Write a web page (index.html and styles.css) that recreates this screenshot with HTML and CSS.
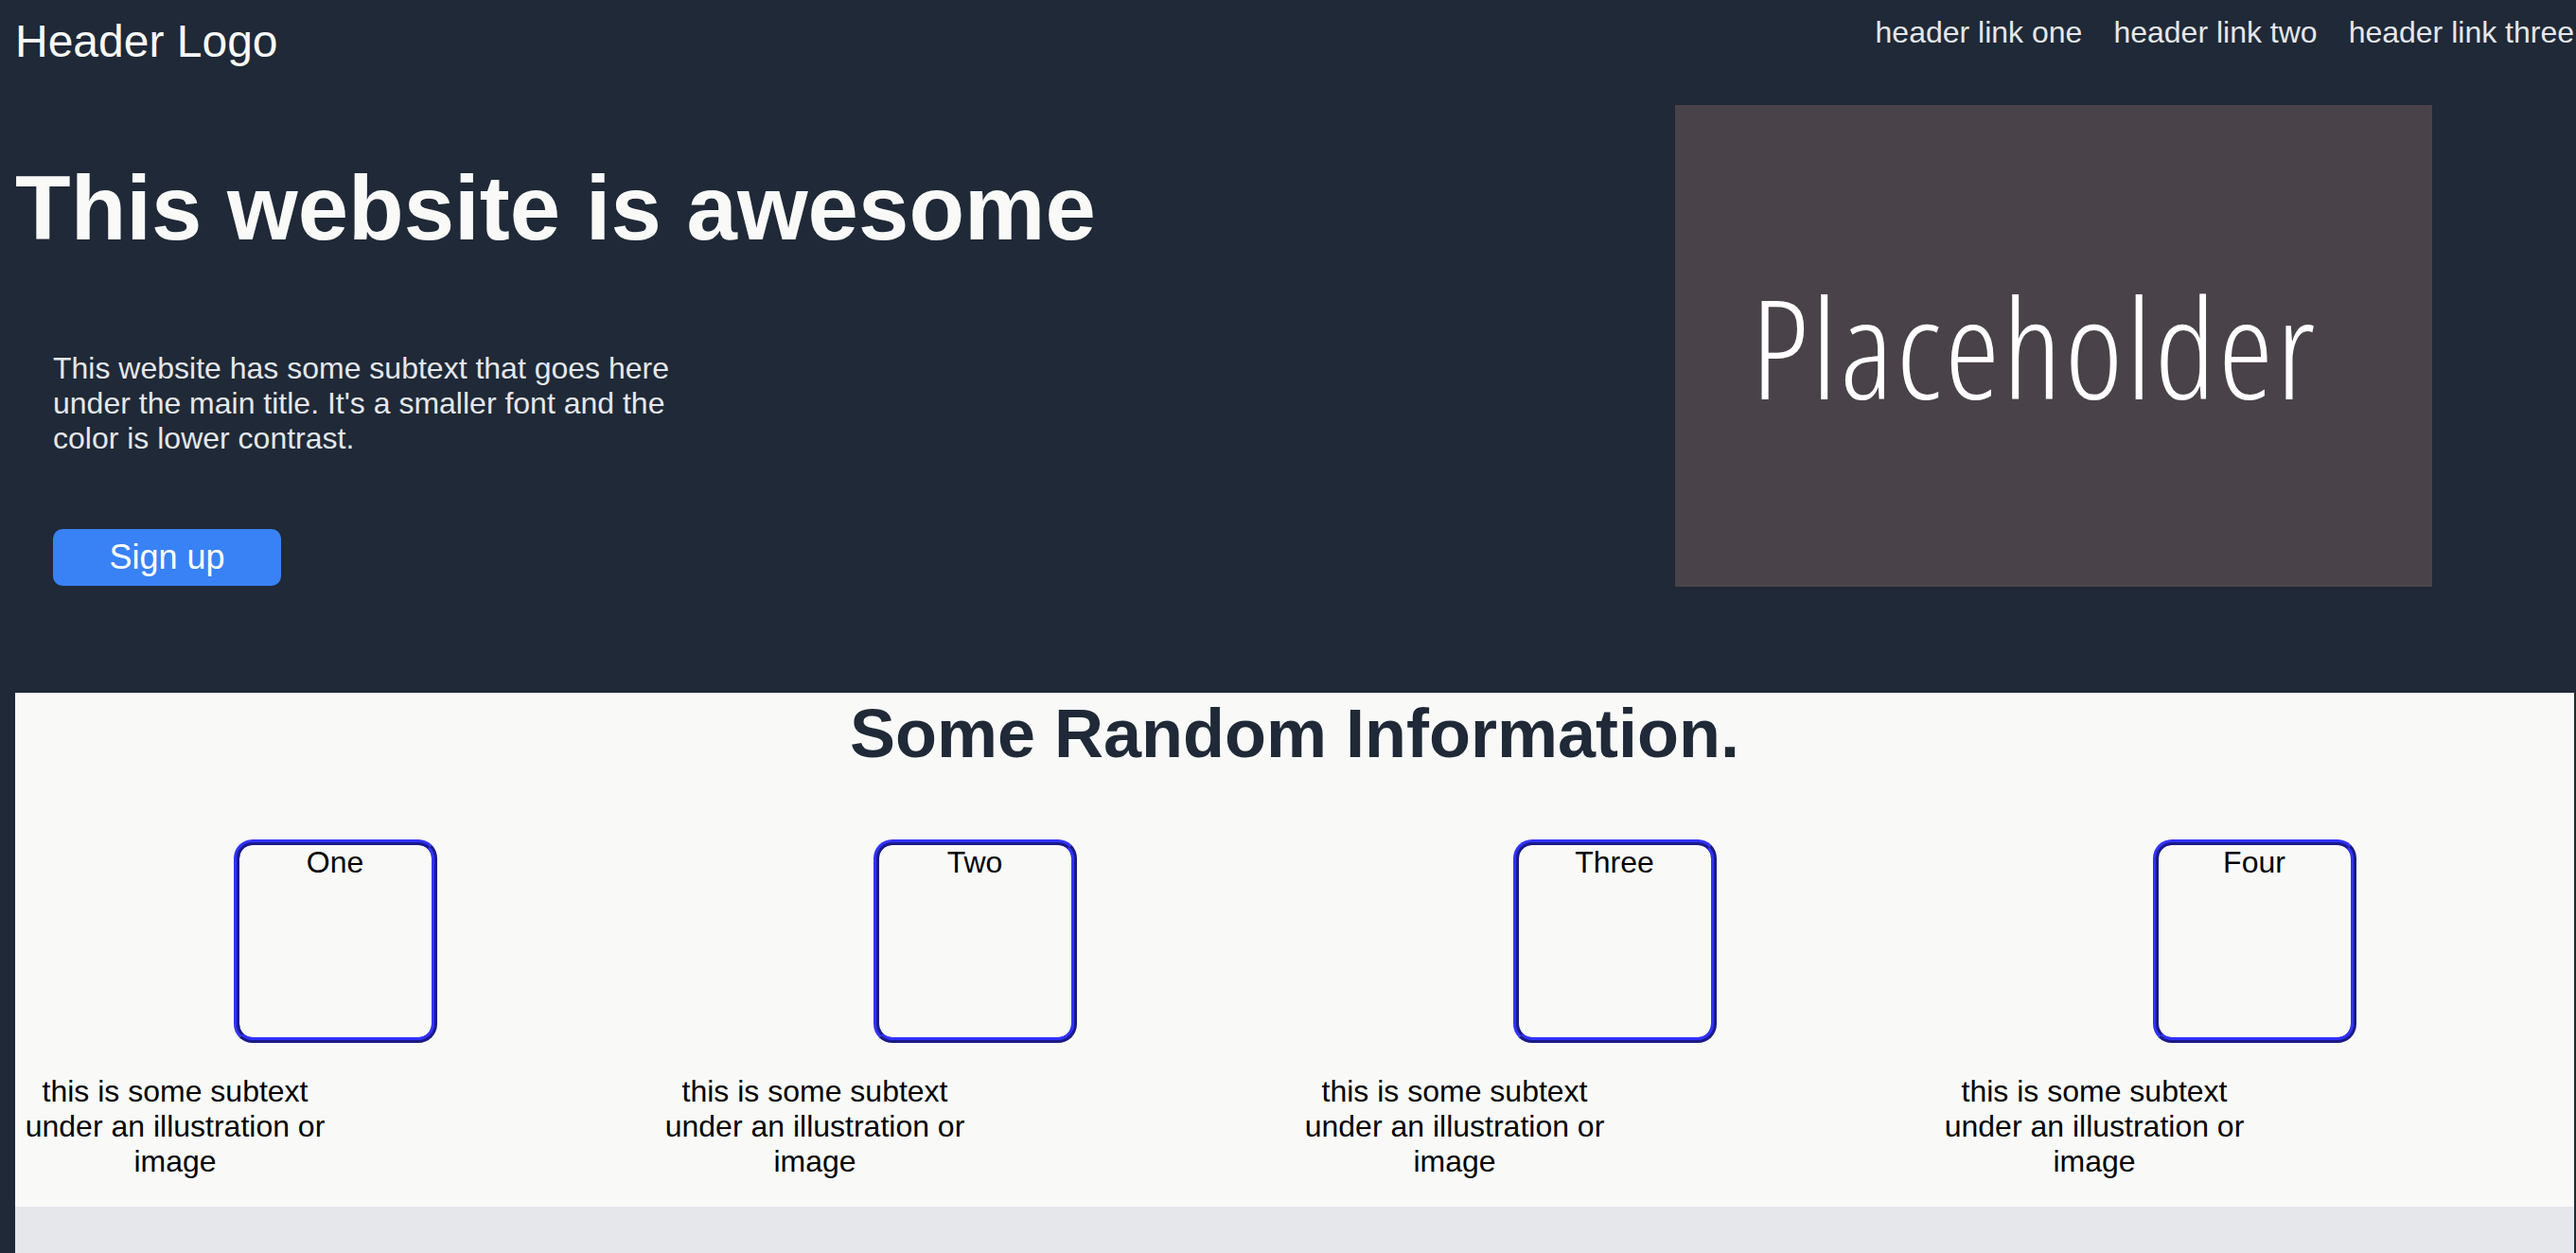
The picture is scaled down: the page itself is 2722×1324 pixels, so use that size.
FILE: index.html
```html
<!DOCTYPE html>
<html lang="en">
<head>
<meta charset="utf-8">
<title>Landing page</title>
<link rel="stylesheet" href="styles.css">
</head>
<body>
<div class="page">
  <header class="header">
    <div class="logo">Header Logo</div>
    <nav class="nav">
      <a class="nav-link" href="#">header link one</a>
      <a class="nav-link" href="#">header link two</a>
      <a class="nav-link" href="#">header link three</a>
    </nav>
  </header>

  <section class="hero">
    <div class="hero-text">
      <h1 class="hero-title">This website is awesome</h1>
      <p class="hero-sub">This website has some subtext that goes here under the main title. It's a smaller font and the color is lower contrast.</p>
      <a class="btn" href="#">Sign up</a>
    </div>
    <div class="hero-image"><span class="hero-image-text">Placeholder</span></div>
  </section>

  <section class="info">
    <h2 class="info-title">Some Random Information.</h2>
    <div class="cards">
      <div class="card">
        <div class="card-box">One</div>
        <p class="card-text">this is some subtext under an illustration or image</p>
      </div>
      <div class="card">
        <div class="card-box">Two</div>
        <p class="card-text">this is some subtext under an illustration or image</p>
      </div>
      <div class="card">
        <div class="card-box">Three</div>
        <p class="card-text">this is some subtext under an illustration or image</p>
      </div>
      <div class="card">
        <div class="card-box">Four</div>
        <p class="card-text">this is some subtext under an illustration or image</p>
      </div>
    </div>
  </section>

  <div class="footer-band"></div>
</div>
</body>
</html>
```

FILE: styles.css
```css
* {
  box-sizing: border-box;
}

html, body {
  margin: 0;
  padding: 0;
}

body {
  background: #1f2937;
  font-family: "Liberation Sans", Arial, sans-serif;
  overflow: hidden;
}

.page {
  padding: 16px 2px 0 16px;
}

.header {
  display: flex;
  justify-content: space-between;
  align-items: flex-start;
}

.logo {
  font-size: 48px;
  line-height: 55px;
  color: #f9faf8;
}

.nav {
  display: flex;
  gap: 33px;
}

.nav-link {
  font-size: 32px;
  line-height: 37px;
  color: #e5e7eb;
  text-decoration: none;
}

.hero {
  display: flex;
  justify-content: space-between;
  align-items: flex-start;
  margin-top: 40px;
  padding-bottom: 112px;
}

.hero-text {
  display: flex;
  flex-direction: column;
  align-items: flex-start;
}

.hero-title {
  margin: 54px 0 0 0;
  font-size: 96px;
  font-weight: 700;
  line-height: 110px;
  color: #f9faf8;
}

.hero-sub {
  margin: 96px 0 0 40px;
  width: 700px;
  font-size: 32px;
  line-height: 36.8px;
  color: #e5e7eb;
}

.btn {
  margin: 78px 0 0 40px;
  width: 241px;
  height: 60px;
  display: flex;
  align-items: center;
  justify-content: center;
  background: #3882f6;
  color: #ffffff;
  border-radius: 10px;
  font-size: 36px;
  text-decoration: none;
}

.hero-image {
  width: 800px;
  height: 509px;
  margin-right: 150px;
  background: #4a4249;
  display: flex;
  align-items: center;
  justify-content: center;
  padding-right: 40px;
}

.hero-image-text {
  font-family: "Open Sans", "Noto Sans", sans-serif;
  font-weight: 300;
  font-stretch: 82%;
  font-size: 146px;
  letter-spacing: 3.5px;
  line-height: 1;
  color: #ffffff;
}

.info {
  background: #f9faf8;
  padding: 2px 0 30px 0;
}

.info-title {
  margin: 0;
  text-align: center;
  font-size: 72px;
  font-weight: 700;
  line-height: 83px;
  color: #1f2937;
}

.cards {
  display: grid;
  grid-template-columns: repeat(4, 1fr);
  margin-top: 70px;
}

.card {
  display: flex;
  flex-direction: column;
}

.card-box {
  align-self: center;
  width: 215px;
  height: 215px;
  border: 6px ridge #2b2bdc;
  border-radius: 20px;
  text-align: center;
  font-size: 32px;
  line-height: 36.8px;
  color: #000000;
}

.card-text {
  margin: 33px 0 0 0;
  width: 50%;
  text-align: center;
  font-size: 32px;
  line-height: 36.8px;
  color: #000000;
}

.footer-band {
  background: #e5e7eb;
  height: 120px;
}
```
